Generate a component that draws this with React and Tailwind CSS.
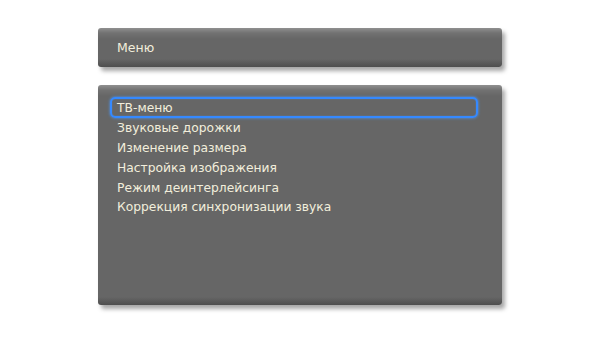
const items = [
  "ТВ-меню",
  "Звуковые дорожки",
  "Изменение размера",
  "Настройка изображения",
  "Режим деинтерлейсинга",
  "Коррекция синхронизации звука",
];

function Panel({ className, children }) {
  return (
    <div
      className={`rounded-[3px] bg-[linear-gradient(180deg,#909090_0px,#727272_5px,#666_11px,#666_calc(100%-8px),#4e4e4e_100%)] shadow-[3px_4px_4px_rgba(0,0,0,0.35)] ${className}`}
    >
      {children}
    </div>
  );
}

export default function App() {
  return (
    <div className="w-[600px] h-[337px] bg-white pt-[28px] pl-[98px] font-['DejaVu_Sans',Verdana,sans-serif] text-[#f2eedc]">
      <Panel className="w-[404px] h-[39px] flex items-center pl-[19px] pt-[1px] text-[12.5px]">Меню</Panel>
      <Panel className="w-[404px] h-[220px] mt-[18px] pt-[12px] pl-[12px]">
        <div className="flex flex-col">
          {items.map((t, i) => (
            <div
              key={t}
              className={`w-[368px] flex items-center text-[12.3px] leading-none rounded-[5px] ${
                i === 0
                  ? "h-[21px] pl-[5px] pt-[1px] border-2 border-[#3589ff] shadow-[0_0_3px_#4a9aff,inset_0_0_1px_#4a9aff]"
                  : "h-[19.8px] pl-[7px] pt-[1px]"
              }`}
            >
              {t}
            </div>
          ))}
        </div>
      </Panel>
    </div>
  );
}
